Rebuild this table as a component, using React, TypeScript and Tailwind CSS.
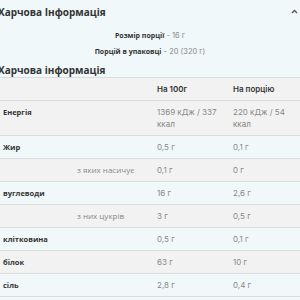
const rows: { label: string; sub?: boolean; per100: string[]; perServing: string[] }[] = [
  { label: "Енергія", per100: ["1369 кДж / 337", "ккал"], perServing: ["220 кДж / 54", "ккал"] },
  { label: "Жир", per100: ["0,5 г"], perServing: ["0,1 г"] },
  { label: "з яких насичує", sub: true, per100: ["0,1 г"], perServing: ["0 г"] },
  { label: "вуглеводи", per100: ["16 г"], perServing: ["2,6 г"] },
  { label: "з них цукрів", sub: true, per100: ["3 г"], perServing: ["0,5 г"] },
  { label: "клітковина", per100: ["0,5 г"], perServing: ["0,1 г"] },
  { label: "білок", per100: ["63 г"], perServing: ["10 г"] },
  { label: "сіль", per100: ["2,8 г"], perServing: ["0,4 г"] },
];

const openSans = "font-['Open_Sans',sans-serif]";
const inter = "font-['Inter',sans-serif]";

export default function App() {
  return (
    <div className="w-[300px] h-[300px] overflow-hidden bg-[#f0f8fa] text-[#333]">
      {/* Header block */}
      <div className="bg-[#f0f8fa]">
        <div className="h-[24px] flex items-center justify-between pr-[2px]">
          <h2 className={`${openSans} -ml-[2px] text-[10px] font-bold leading-none text-[#333]`}>
            Харчова Інформація
          </h2>
          <svg width="7" height="5" viewBox="0 0 7 5" className="mt-[-1px]">
            <polyline points="1,4 3.5,1.5 6,4" fill="none" stroke="#555" strokeWidth="1.4" />
          </svg>
        </div>
        <p className="mt-[6px] text-center leading-[12px] text-[7px]">
          <span className={`${openSans} font-bold text-[#333]`}>Розмір порції</span>
          <span className={`${inter} text-[7.5px] text-[#888]`}> - 16 г</span>
        </p>
        <p className="mt-[4px] text-center leading-[12px] text-[7px]">
          <span className={`${openSans} font-bold text-[#333]`}>Порцій в упаковці</span>
          <span className={`${inter} text-[7.5px] text-[#888]`}> - 20 (320 г)</span>
        </p>
        <h3 className={`${openSans} mt-[6px] -ml-[2px] h-[14px] text-[10px] font-bold leading-[12px] text-[#333] border-b border-[#dcdcdc]`}>
          Харчова інформація
        </h3>
      </div>

      {/* Table */}
      <div className="text-[8px]">
        <div className="grid grid-cols-[150px_76px_74px] bg-[#f2f2f2] border-b border-[#dcdcdc] h-[23px] items-center">
          <div />
          <div className={`${inter} pl-[7px] font-semibold text-[#333]`}>На 100г</div>
          <div className={`${inter} pl-[7px] font-semibold text-[#333]`}>На порцію</div>
        </div>
        {rows.map((r, i) => (
          <div
            key={r.label}
            className={`grid grid-cols-[150px_76px_74px] border-b border-[#dcdcdc] py-[5px] leading-[12px] ${
              i % 2 === 0 ? "bg-[#f2f2f2]" : "bg-[#f0f8fa]"
            }`}
          >
            <div
              className={
                r.sub
                  ? `${openSans} pl-[77px] text-[8px] text-[#888] whitespace-nowrap overflow-hidden`
                  : `${openSans} pl-[3px] text-[7.5px] font-bold text-[#333]`
              }
            >
              {r.label}
            </div>
            <div className={`${inter} pl-[7px] text-[#888]`}>
              {r.per100.map((t) => (
                <div key={t}>{t}</div>
              ))}
            </div>
            <div className={`${inter} pl-[7px] text-[#888]`}>
              {r.perServing.map((t) => (
                <div key={t}>{t}</div>
              ))}
            </div>
          </div>
        ))}
      </div>
    </div>
  );
}
